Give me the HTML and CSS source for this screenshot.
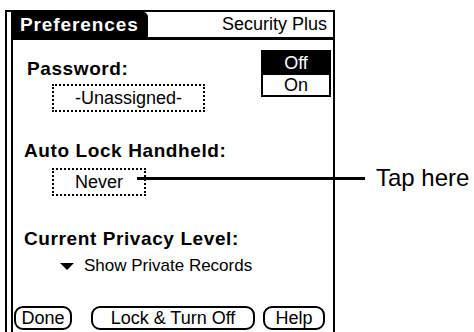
FILE: index.html
```html
<!DOCTYPE html>
<html lang="en">

<head>
    <meta charset="UTF-8">
    <title>Security Plus</title>
    <link rel="stylesheet" href="styles.css">
</head>

<body>
    <div class="page">
        <div class="device">
            <div class="screen">
                <div class="titlebar">
                    <div class="tab">Preferences</div>
                    <div class="app-name">Security Plus</div>
                </div>

                <div class="top-row">
                    <div class="left-col">
                        <div class="label">Password:</div>
                        <div class="field field-password">-Unassigned-</div>
                    </div>
                    <div class="toggle">
                        <div class="toggle-item selected">Off</div>
                        <div class="toggle-item">On</div>
                    </div>
                </div>

                <div class="label label-lock">Auto Lock Handheld:</div>
                <div class="field field-never">Never</div>

                <div class="label label-privacy">Current Privacy Level:</div>
                <div class="popup">
                    <span class="arrow"></span>
                    <span>Show Private Records</span>
                </div>

                <div class="buttons">
                    <button class="btn btn-done" type="button">Done</button>
                    <button class="btn btn-lock" type="button">Lock &amp; Turn Off</button>
                    <button class="btn btn-help" type="button">Help</button>
                </div>
            </div>
        </div>

        <!-- callout pointing at the Never field -->
        <div class="callout-line"></div>
        <div class="callout-text">Tap here</div>
    </div>
</body>

</html>
```

FILE: styles.css
```css
* {
    box-sizing: border-box;
}

body {
    margin: 0;
    background: #fff;
    color: #000;
    font-family: "Liberation Sans", Arial, sans-serif;
}

.page {
    position: relative;
    width: 474px;
    height: 332px;
    padding-top: 10px;
    overflow: hidden;
}

.device {
    margin-left: 5px;
    width: 330px;
    height: 322px;
    border-top: 2px solid #000;
    border-left: 2px solid #000;
    border-right: 2px solid #000;
}

.screen {
    margin-left: 4px;
    height: 100%;
    border-left: 2px solid #000;
    display: flex;
    flex-direction: column;
}

.titlebar {
    display: flex;
    align-items: stretch;
    height: 28px;
    border-bottom: 3px solid #000;
}

.tab {
    width: 135px;
    background: #000;
    color: #fff;
    font-weight: bold;
    font-size: 19px;
    letter-spacing: 0.9px;
    line-height: 25px;
    padding-left: 7px;
    border-top-right-radius: 5px;
}

.app-name {
    margin-left: auto;
    padding-right: 6px;
    font-size: 18px;
    line-height: 25px;
}

.top-row {
    display: flex;
    align-items: flex-start;
    margin-top: 10px;
}

.left-col {
    flex: 1;
}

.label {
    font-weight: bold;
    font-size: 19px;
    letter-spacing: 0.6px;
    line-height: 22px;
    padding-left: 14px;
    margin-top: 8px;
}

.label-lock,
.label-privacy {
    padding-left: 11px;
}

.field {
    margin-left: 39px;
    height: 28px;
    border: 2px dotted #000;
    font-size: 18px;
    line-height: 24px;
    text-align: center;
}

.field-password {
    width: 153px;
    margin-top: 4px;
}

.toggle {
    width: 70px;
    margin-right: 2px;
    border: 2px solid #000;
    font-size: 18px;
    text-align: center;
}

.toggle-item {
    height: 20px;
    line-height: 20px;
}

.toggle-item.selected {
    height: 23px;
    line-height: 23px;
    background: #000;
    color: #fff;
}

.label-lock {
    margin-top: 28px;
}

.field-never {
    width: 94px;
    margin-top: 6px;
}

.label-privacy {
    margin-top: 32px;
}

.popup {
    display: flex;
    align-items: center;
    margin-top: 5px;
    padding-left: 47px;
    font-size: 17px;
    line-height: 22px;
}

.arrow {
    width: 0;
    height: 0;
    border-left: 7px solid transparent;
    border-right: 7px solid transparent;
    border-top: 7px solid #000;
    margin-right: 10px;
}

.buttons {
    display: flex;
    margin-top: auto;
    margin-bottom: 2px;
    padding-left: 1px;
}

.btn {
    height: 24px;
    padding: 0;
    background: #fff;
    color: #000;
    border: 2px solid #000;
    border-radius: 9px;
    font-family: "Liberation Sans", Arial, sans-serif;
    font-size: 18px;
    line-height: 20px;
}

.btn-done {
    width: 58px;
}

.btn-lock {
    width: 164px;
    margin-left: 19px;
}

.btn-help {
    width: 62px;
    margin-left: 8px;
}

.callout-line {
    position: absolute;
    left: 137px;
    top: 177px;
    width: 228px;
    height: 3px;
    background: #000;
}

.callout-text {
    position: absolute;
    left: 376px;
    top: 164px;
    font-size: 24px;
    line-height: 28px;
}
```
